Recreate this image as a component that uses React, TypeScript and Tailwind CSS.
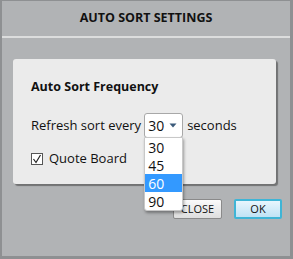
import React from "react";

export default function App() {
  const font = { fontFamily: '"Open Sans", "Noto Sans", sans-serif' };
  return (
    <div
      className="w-[293px] h-[259px] bg-[#b1b3b5] border-l-2 border-r-[3px] border-b-[3px] border-t border-[#8e9092] flex flex-col text-[#111]"
      style={font}
    >
      <div className="h-[37px] flex items-center justify-center border-b-2 border-[#dcdddd] shrink-0">
        <span className="text-[12.5px] font-bold text-[#111]">AUTO SORT SETTINGS</span>
      </div>
      <div className="ml-[11px] mt-[21px] w-[263px] h-[125px] bg-[#ebebeb] rounded-[3px] shadow-[2px_2px_1px_rgba(60,60,60,0.55)] pl-[18px] pt-[18px] relative">
        <div className="text-[12.5px] font-bold leading-[20px]">Auto Sort Frequency</div>
        <div className="flex items-center mt-[16px] h-[25px] text-[13px]">
          <span>Refresh sort every</span>
          <div className="relative ml-[3px]">
            <div className="w-[39px] h-[25px] bg-white border border-[#a8a8a8] rounded-[3px] flex items-center pl-[3px]">
              <span className="text-[14px]">30</span>
              <svg width="8" height="5" viewBox="0 0 8 5" className="ml-[5px]">
                <path d="M0.5 0.5 L7.5 0.5 L4 4.5 Z" fill="#3b5a7a" />
              </svg>
            </div>
            <div className="absolute left-0 top-[24px] w-[39px] bg-white border border-[#c8c8c8] rounded-b-[3px] shadow-[1px_2px_3px_rgba(0,0,0,0.35)] z-10 text-[14px]">
              <div className="h-[18px] flex items-center pl-[3px]">30</div>
              <div className="h-[18px] flex items-center pl-[3px]">45</div>
              <div className="h-[18px] flex items-center pl-[3px] bg-[#3399ff] text-white">60</div>
              <div className="h-[18px] flex items-center pl-[3px]">90</div>
            </div>
          </div>
          <span className="ml-[4px]">seconds</span>
        </div>
        <div className="flex items-center mt-[11px] text-[13px]">
          <div className="w-[12px] h-[12px] border border-[#555] bg-white flex items-center justify-center">
            <svg width="10" height="10" viewBox="0 0 10 10">
              <path d="M1.5 5 L4 8.5 L8.5 1" stroke="#222" strokeWidth="1.2" fill="none" />
            </svg>
          </div>
          <span className="ml-[6px]">Quote Board</span>
        </div>
      </div>
      <div className="flex justify-end gap-[12px] mt-[15px] mr-[8px]">
        <button className="w-[49px] h-[20px] bg-gradient-to-b from-[#fafafa] to-[#dedede] border border-[#8a8a8a] rounded-[2px] text-[11px] flex items-center justify-center">
          CLOSE
        </button>
        <button className="w-[48px] h-[20px] bg-gradient-to-b from-[#e8f6fd] to-[#bfe3f5] border-2 border-[#3fb5d6] rounded-[2px] text-[11px] flex items-center justify-center">
          OK
        </button>
      </div>
    </div>
  );
}
